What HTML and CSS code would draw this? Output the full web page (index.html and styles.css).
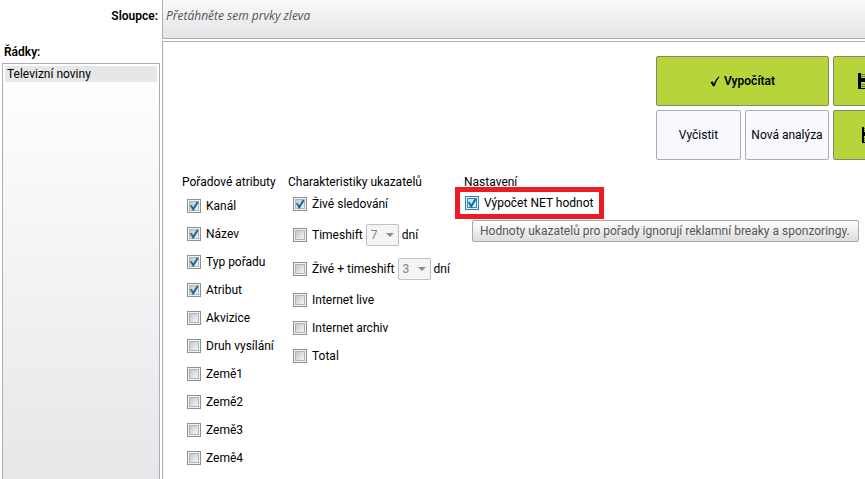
FILE: index.html
```html
<!DOCTYPE html>
<html lang="cs">
<head>
<meta charset="utf-8">
<title>Analýza</title>
<link rel="stylesheet" href="styles.css">
</head>
<body>
<div class="app">
  <div class="columns-label">Sloupce:</div>
  <div class="columns-drop">Přetáhněte sem prvky zleva</div>
  <aside class="rows">
    <div class="rows-label">Řádky:</div>
    <ul class="rows-list">
      <li class="rows-item">Televizní noviny</li>
    </ul>
  </aside>
  <main class="panel">
    <div class="toolbar">
      <button class="btn btn-green btn-run" type="button"><svg class="tick" viewBox="0 0 10 11" aria-hidden="true"><path d="M0.5 6.2 L2.6 5.3 L3.8 7.4 Q5.6 3 8.600 0.5 L9.600 0.5 Q6.4 4.600 4.600 10.3 L2.900 10.3 Z"/></svg>Vypočítat</button>
      <button class="btn btn-green btn-save" type="button" aria-label="Uložit"><svg class="disk" viewBox="0 0 16 16" aria-hidden="true"><path d="M0 0h16v16H0z"/><path class="disk-label" d="M3 0h10v5H3zM3 9h10v6H3z"/><path class="disk-line" d="M3 1.500h10M3 3.500h10M3 11.500h10M3 13.500h10"/></svg></button>
      <button class="btn" type="button">Vyčistit</button>
      <button class="btn" type="button">Nová analýza</button>
      <button class="btn btn-green btn-save-as" type="button" aria-label="Uložit jako"><svg class="disk" viewBox="0 0 16 16" aria-hidden="true"><path d="M0 0h16v16H0z"/><path class="disk-label" d="M2 0h12v5H2zM2 9h12v6H2z"/><path class="disk-line" d="M2 1.500h12M2 3.500h12M2 11.500h12M2 13.500h12"/></svg></button>
    </div>
    <div class="options">
      <section class="group group-attributes">
        <h2 class="title">Pořadové atributy</h2>
        <label class="row"><input class="check" type="checkbox" checked>Kanál</label>
        <label class="row"><input class="check" type="checkbox" checked>Název</label>
        <label class="row"><input class="check" type="checkbox" checked>Typ pořadu</label>
        <label class="row"><input class="check" type="checkbox" checked>Atribut</label>
        <label class="row"><input class="check" type="checkbox">Akvizice</label>
        <label class="row"><input class="check" type="checkbox">Druh vysílání</label>
        <label class="row"><input class="check" type="checkbox">Země1</label>
        <label class="row"><input class="check" type="checkbox">Země2</label>
        <label class="row"><input class="check" type="checkbox">Země3</label>
        <label class="row"><input class="check" type="checkbox">Země4</label>
      </section>
      <section class="group group-metrics">
        <h2 class="title">Charakteristiky ukazatelů</h2>
        <label class="row"><input class="check" type="checkbox" checked>Živé sledování</label>
        <div class="row row-tall">
          <label class="row-label"><input class="check" type="checkbox">Timeshift</label>
          <span class="picker"><select class="select" aria-label="Timeshift, počet dní" disabled><option>7</option></select></span>
          <span>dní</span>
        </div>
        <div class="row row-tall">
          <label class="row-label"><input class="check" type="checkbox">Živé + timeshift</label>
          <span class="picker"><select class="select" aria-label="Živé + timeshift, počet dní" disabled><option>3</option></select></span>
          <span>dní</span>
        </div>
        <label class="row"><input class="check" type="checkbox">Internet live</label>
        <label class="row"><input class="check" type="checkbox">Internet archiv</label>
        <label class="row"><input class="check" type="checkbox">Total</label>
      </section>
      <section class="group group-settings">
        <h2 class="title">Nastavení</h2>
        <div class="highlight">
          <label class="row-label"><input class="check check-active" type="checkbox" aria-describedby="net-tip" checked>Výpočet NET hodnot</label>
          <div class="tooltip" id="net-tip" role="tooltip">Hodnoty ukazatelů pro pořady ignorují reklamní breaky a sponzoringy.</div>
        </div>
      </section>
    </div>
  </main>
</div>
</body>
</html>
```
FILE: styles.css
```css
* {
  box-sizing: border-box;
}

body {
  margin: 0;
  background: #fff;
  color: #000;
  font: 12px/16px Roboto, "Open Sans", sans-serif;
  overflow: hidden;
}

.app {
  display: grid;
  grid-template-columns: 158px minmax(0, 1fr);
  grid-template-rows: 39px 1fr;
  column-gap: 4px;
  min-height: 100vh;
}

.columns-label {
  padding-top: 8px;
  text-align: right;
  font-weight: 600;
}

.columns-drop {
  padding: 8px 3px;
  border: solid #abadb3;
  border-width: 0 0 1px 1px;
  background: linear-gradient(#f8f9f9, #e3e4e6);
  color: #555;
  font-family: "Open Sans", sans-serif;
  font-style: italic;
}

.rows {
  display: flex;
  flex-direction: column;
  margin: 5px -2px 0 2px;
}

.rows-label {
  padding-left: 2px;
  font-weight: 600;
}

.rows-list {
  flex: 1;
  margin: 3px 0 0;
  padding: 2px;
  border: 1px solid #abadb3;
  border-bottom: 0;
  background: linear-gradient(#fff, #e6e7e9);
  list-style: none;
}

.rows-item {
  padding: 0 2px;
  background: #e7e7e7;
}

.panel {
  margin-top: 2px;
  border: solid #abadb3;
  border-width: 1px 0 0 1px;
  overflow: hidden;
}

.toolbar {
  display: grid;
  grid-template-columns: 85px 84px 85px;
  grid-auto-rows: 50px;
  gap: 4px;
  justify-content: end;
  margin: 14px -53px 0 0;
}

.btn {
  display: flex;
  align-items: center;
  justify-content: center;
  padding: 0;
  border: 1px solid #abadb3;
  border-radius: 2px;
  background: #f8f8ff;
  color: #000;
  font: inherit;
  white-space: nowrap;
}

.btn-green {
  border-color: #82876f;
  background: #b7d53a;
}

.btn-run {
  grid-column: span 2;
  gap: 4px;
  font-weight: 600;
}

.btn-save,
.btn-save-as {
  justify-content: flex-start;
  padding-left: 24px;
}

.btn-save-as {
  padding-left: 28px;
}

.tick {
  width: 10px;
  height: 11px;
}

.disk {
  width: 16px;
  height: 16px;
}

.disk-label {
  fill: #b7d53a;
}

.disk-line {
  stroke: #6d8022;
}

.options {
  display: flex;
  align-items: flex-start;
  margin: 14px 0 0 19px;
}

.group-attributes {
  width: 106px;
}

.group-metrics {
  width: 176px;
}

.title {
  margin: 0;
  font: inherit;
  white-space: nowrap;
}

.row {
  display: flex;
  align-items: center;
  gap: 3px;
  height: 28px;
  padding-left: 5px;
  white-space: nowrap;
}

label.row,
.row-label {
  display: flex;
  align-items: center;
  gap: 5px;
}

.group-attributes .title {
  margin-bottom: 2px;
}

.row-tall {
  height: 34px;
}

.check {
  appearance: none;
  flex: none;
  width: 14px;
  height: 14px;
  margin: 0;
  border: 1px solid #8e8f8f;
  background:
    linear-gradient(135deg, #c3c6cc, #f6f6f6) center / 8px 8px no-repeat,
    linear-gradient(#b0b3b7, #b0b3b7) center / 10px 10px no-repeat,
    #f4f4f4;
}

.check:checked {
  display: grid;
  place-items: center;
}

.check:checked::before {
  content: "";
  width: 10px;
  height: 10px;
  background: #157297;
  clip-path: polygon(10% 46%, 26% 38%, 42% 62%, 78% 4%, 96% 14%, 48% 94%, 36% 94%);
}

.check-active {
  border-color: #3c7fb1;
  background:
    linear-gradient(135deg, #b4dcf0, #e6f5fc) center / 8px 8px no-repeat,
    linear-gradient(#3c87b5, #3c87b5) center / 10px 10px no-repeat,
    #def4fd;
}

.picker {
  position: relative;
  display: block;
}

.picker::after {
  content: "";
  position: absolute;
  top: 9px;
  right: 5px;
  border: solid transparent;
  border-width: 4px 4px 0;
  border-top-color: #8a8a8a;
  pointer-events: none;
}

.select {
  appearance: none;
  display: block;
  width: 33px;
  height: 22px;
  padding: 0 4px;
  border: 1px solid #bfc1c5;
  border-radius: 2px;
  background: #f4f4f4;
  color: #858585;
  font: inherit;
  opacity: 1;
}

.highlight {
  position: relative;
  width: 139px;
  height: 22px;
  margin: 2px 0 0 -4px;
  padding: 3px 5px;
  outline: 5px solid #ed1c24;
  white-space: nowrap;
}

.tooltip {
  position: absolute;
  top: 28px;
  left: 12px;
  padding: 2px 8px 2px 7px;
  border: 1px solid #a9a9a9;
  border-radius: 2px;
  background: linear-gradient(#fff, #dcdcdc);
  color: #575757;
}
```
